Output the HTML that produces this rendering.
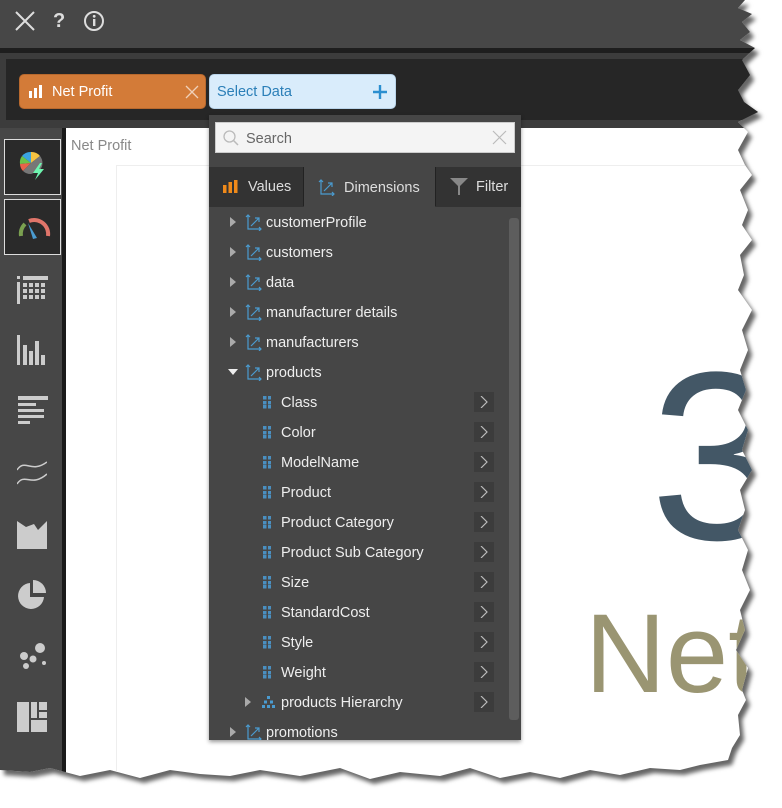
<!DOCTYPE html>
<html><head><meta charset="utf-8"><style>
*{margin:0;padding:0;box-sizing:border-box}
body{width:782px;height:804px;background:#fff;position:relative;overflow:hidden;font-family:"Liberation Sans",sans-serif}
.wrap{position:absolute;left:0;top:0;width:782px;height:804px;filter:drop-shadow(4px 5px 2px rgba(0,0,0,.6))}
.app{position:absolute;left:0;top:0;width:782px;height:804px;background:#fff;
clip-path:polygon(0 0,745px 0,738px 8px,752px 14px,742px 22px,750px 32px,740px 40px,755px 48px,742px 60px,750px 75px,738px 90px,744px 102px,758px 112px,738px 122px,748px 132px,738px 150px,745px 165px,752px 175px,740px 190px,748px 210px,742px 225px,752px 240px,740px 255px,744px 275px,738px 290px,752px 310px,742px 330px,748px 350px,740px 370px,746px 390px,738px 410px,748px 430px,742px 450px,752px 470px,740px 490px,745px 510px,738px 530px,748px 550px,742px 570px,750px 590px,740px 610px,745px 630px,736px 650px,748px 668px,742px 690px,746px 700px,738px 715px,740px 735px,732px 748px,728px 760px,700px 765px,680px 770px,650px 768px,620px 775px,590px 770px,560px 778px,530px 772px,500px 778px,470px 768px,440px 776px,400px 772px,370px 779px,340px 768px,300px 776px,260px 770px,230px 776px,200px 774px,170px 770px,140px 778px,110px 770px,80px 776px,50px 768px,30px 772px,0 770px)}
.top{position:absolute;left:0;top:0;width:782px;height:48px;background:#474747}
.b1{position:absolute;left:0;top:48px;width:782px;height:5px;background:#1e1e1e}
.b2{position:absolute;left:0;top:53px;width:782px;height:75px;background:#3c3c3c}
.tb{position:absolute;left:6px;top:59px;width:776px;height:61px;background:#262626}
.side{position:absolute;left:0;top:128px;width:62px;height:680px;background:#474747}
.sideb{position:absolute;left:62px;top:128px;width:4px;height:680px;background:#1a1a1a}
.sb{position:absolute;left:4px;width:57px;height:56px;border:1px solid #ddd;background:#2a2a2a}
.si{position:absolute;left:17px}
.pill{position:absolute;top:74px;height:35px;border-radius:5px;font-size:14.5px;line-height:35px}
.panel{position:absolute;left:209px;top:115px;width:312px;height:625px;background:#464646;box-shadow:0 2px 4px rgba(0,0,0,.4)}
.row{position:absolute;left:0;height:30px;line-height:32px;color:#eee;font-size:14.5px;width:300px}
.tri{position:absolute;width:0;height:0;border-top:5px solid transparent;border-bottom:5px solid transparent;border-left:6px solid #aaa;top:10px}
.trid{position:absolute;width:0;height:0;border-left:5px solid transparent;border-right:5px solid transparent;border-top:6px solid #eee;top:12px}
.arr{position:absolute;left:265px;top:5px;width:20px;height:20px;background:#3c3c3c}
.grid{position:absolute;top:9px;width:8px;height:13px;background:
linear-gradient(#4a8fc0,#4a8fc0) 0 0/3.5px 3.5px,linear-gradient(#4a8fc0,#4a8fc0) 4.5px 0/3.5px 3.5px,
linear-gradient(#4a8fc0,#4a8fc0) 0 4.7px/3.5px 3.5px,linear-gradient(#4a8fc0,#4a8fc0) 4.5px 4.7px/3.5px 3.5px,
linear-gradient(#4a8fc0,#4a8fc0) 0 9.4px/3.5px 3.5px,linear-gradient(#4a8fc0,#4a8fc0) 4.5px 9.4px/3.5px 3.5px;background-repeat:no-repeat}
</style></head><body>
<div class="wrap"><div class="app">
<div class="top">
<svg style="position:absolute;left:15px;top:11px" width="20" height="20" viewBox="0 0 20 20"><path d="M1 1L19 19M19 1L1 19" stroke="#ddd" stroke-width="2"/></svg>
<div style="position:absolute;left:53px;top:10px;color:#ddd;font-size:20px;font-weight:bold">?</div>
<svg style="position:absolute;left:83px;top:10px" width="22" height="22" viewBox="0 0 22 22"><circle cx="11" cy="11" r="9" fill="none" stroke="#ddd" stroke-width="2"/><rect x="10" y="9" width="2.4" height="7" fill="#ddd"/><circle cx="11.2" cy="6.3" r="1.4" fill="#ddd"/></svg>
</div>
<div class="b1"></div><div class="b2"></div><div class="tb"></div>
<div class="pill" style="left:19px;width:187px;background:#d37b38;border:1px solid #b8692e;color:#fff">
<svg style="position:absolute;left:9px;top:10px" width="14" height="13"><rect x="0" y="6" width="3" height="7" fill="#fff"/><rect x="5" y="3" width="3" height="10" fill="#fff"/><rect x="10" y="0" width="3" height="13" fill="#fff"/></svg>
<span style="position:absolute;left:32px">Net Profit</span>
<svg style="position:absolute;left:165px;top:10px" width="14" height="14"><path d="M1 1L13 13M13 1L1 13" stroke="#f0d0b8" stroke-width="1.3"/></svg></div>
<div class="pill" style="left:209px;width:187px;background:#d9ecfb;border:1px solid #b9d4ea;color:#2b7fb8">
<span style="position:absolute;left:7px">Select Data</span>
<svg style="position:absolute;left:163px;top:10px" width="14" height="14"><path d="M7 0V14M0 7H14" stroke="#2b8fd0" stroke-width="2.4"/></svg></div>
<div class="side"></div><div class="sideb"></div>
<div class="sb" style="top:139px"><svg style="position:absolute;left:14px;top:11px" width="30" height="30" viewBox="0 0 30 30"><path d="M12 12L12 1A11 11 0 0 1 21 5Z" fill="#f5c342"/><path d="M12 12L3 5A11 11 0 0 1 12 1Z" fill="#3aa3e0"/><path d="M12 12L1 13A11 11 0 0 1 3 5Z" fill="#6cc24a"/><path d="M12 12L4 20A11 11 0 0 1 1 13Z" fill="#e8624a"/><path d="M12 12L21 5A11 11 0 0 1 20 20L12 23A11 11 0 0 1 4 20Z" fill="#777"/><path d="M21 12L14 22H19L16 29L25 18H20L23 12Z" fill="#6ef5b0"/></svg></div>
<div class="sb" style="top:199px"><svg style="position:absolute;left:12px;top:14px" width="34" height="26" viewBox="0 0 34 26"><path d="M4 22A14 14 0 0 1 8 10" stroke="#7aa050" stroke-width="4" fill="none"/><path d="M12 7A14 14 0 0 1 31 22" stroke="#e0756a" stroke-width="4" fill="none"/><path d="M11 9L20 24L16 25Z" fill="#4a9bd0"/></svg></div>
<svg class="si" style="top:276px" width="31" height="28"><rect x="0" y="0" width="3" height="3" fill="#ccc"/><rect x="0" y="6" width="3" height="22" fill="#ccc"/><g fill="#ccc"><rect x="6" y="0" width="25" height="4"/></g><g fill="#ccc"><rect x="6" y="7" width="4" height="4"/><rect x="12" y="7" width="4" height="4"/><rect x="18" y="7" width="4" height="4"/><rect x="24" y="7" width="4" height="4"/><rect x="6" y="13" width="4" height="4"/><rect x="12" y="13" width="4" height="4"/><rect x="18" y="13" width="4" height="4"/><rect x="24" y="13" width="4" height="4"/><rect x="6" y="19" width="4" height="4"/><rect x="12" y="19" width="4" height="4"/><rect x="18" y="19" width="4" height="4"/><rect x="24" y="19" width="4" height="4"/></g></svg>
<svg class="si" style="top:335px" width="30" height="30" fill="#ccc"><rect x="0" y="0" width="3" height="30"/><rect x="6" y="10" width="4" height="20"/><rect x="12" y="16" width="4" height="14"/><rect x="18" y="6" width="4" height="24"/><rect x="24" y="20" width="4" height="10"/></svg>
<svg class="si" style="top:396px;left:18px" width="30" height="30" fill="#ccc"><rect x="0" y="0" width="30" height="4"/><rect x="0" y="7" width="18" height="3"/><rect x="0" y="13" width="26" height="3"/><rect x="0" y="19" width="26" height="3"/><rect x="0" y="25" width="12" height="3"/></svg>
<svg class="si" style="top:458px" width="30" height="28"><path d="M0 12C8 0 14 16 30 4M0 26C8 14 14 30 30 16" stroke="#ccc" stroke-width="1.5" fill="none"/></svg>
<svg class="si" style="top:521px" width="30" height="28"><path d="M0 0L9 6L17 3L21 9L30 0V28H0Z" fill="#ccc"/></svg>
<svg class="si" style="top:580px" width="30" height="30"><path d="M13 3A13 13 0 1 0 27 17H13Z" fill="#ccc"/><path d="M16 0A13 13 0 0 1 29 13H16Z" fill="#ccc"/></svg>
<svg class="si" style="top:641px" width="30" height="30" fill="#ccc"><circle cx="23" cy="7" r="5"/><circle cx="7" cy="15" r="4"/><circle cx="16" cy="18" r="3.5"/><circle cx="9" cy="25" r="3"/><circle cx="27" cy="22" r="2"/></svg>
<svg class="si" style="top:702px" width="30" height="30" fill="#ccc"><rect x="0" y="0" width="12" height="30"/><rect x="14" y="0" width="6" height="16"/><rect x="22" y="0" width="8" height="8"/><rect x="22" y="10" width="8" height="6"/><rect x="14" y="18" width="16" height="12"/></svg>
<div style="position:absolute;left:71px;top:138px;color:#888;font-size:14.5px">Net Profit</div>
<div style="position:absolute;left:116px;top:165px;width:700px;height:1px;background:#eee"></div>
<div style="position:absolute;left:116px;top:165px;width:1px;height:640px;background:#eee"></div>
<div style="position:absolute;left:650px;top:336px;color:#435766;font-size:240px;line-height:1">3</div>
<div style="position:absolute;left:585px;top:598px;color:#9a9572;font-size:112px;line-height:1">Net</div>

<div class="panel">
<div style="position:absolute;left:6px;top:7px;width:300px;height:31px;background:#f4f4f4;border:1px solid #ccc">
<svg style="position:absolute;left:7px;top:7px" width="16" height="16"><circle cx="6.5" cy="6.5" r="5.5" stroke="#bbb" stroke-width="1.3" fill="none"/><path d="M10.5 10.5L15 15" stroke="#bbb" stroke-width="1.5"/></svg>
<span style="position:absolute;left:30px;top:8px;color:#666;font-size:14.5px">Search</span>
<svg style="position:absolute;left:276px;top:7px" width="15" height="15"><path d="M1 1L14 14M14 1L1 14" stroke="#bbb" stroke-width="1.2"/></svg></div>
<div style="position:absolute;left:0;top:52px;width:312px;height:40px;background:#333"></div>
<div style="position:absolute;left:0;top:52px;width:95px;height:39px;border-right:1px solid #222;color:#ddd;font-size:14.5px;line-height:40px">
<svg style="position:absolute;left:14px;top:13px" width="15" height="13" fill="#f08a1a"><rect x="0" y="5" width="3.5" height="8"/><rect x="5.5" y="2" width="3.5" height="11"/><rect x="11" y="0" width="3.5" height="13"/></svg><span style="position:absolute;left:39px">Values</span></div>
<div style="position:absolute;left:95px;top:52px;width:131px;height:40px;background:#464646;color:#ddd;font-size:14.5px;line-height:42px">
<svg style="position:absolute;left:14px;top:12px" width="17" height="17"><path d="M3 1V15H16M1 3L3 1L5 3M14 13L16 15L14 17M6 12L14 4M10 4H14V8" stroke="#4a9bd0" stroke-width="1.2" fill="none"/></svg><span style="position:absolute;left:40px">Dimensions</span></div>
<div style="position:absolute;left:226px;top:52px;width:86px;height:39px;border-left:1px solid #222;color:#ddd;font-size:14.5px;line-height:40px">
<svg style="position:absolute;left:14px;top:11px" width="18" height="17"><path d="M0 0H18L10 8V17H8V8Z" fill="#888"/></svg><span style="position:absolute;left:40px">Filter</span></div>
<div style="position:absolute;left:300px;top:103px;width:10px;height:502px;background:#5d5d5d;border-radius:3px"></div>
<div style="position:absolute;left:0;top:92px;width:300px;height:533px;overflow:hidden">
<div id="rows"></div>
</div>
</div>
</div></div>
<script>
var dims=['customerProfile','customers','data','manufacturer details','manufacturers'];
var attrs=['Class','Color','ModelName','Product','Product Category','Product Sub Category','Size','StandardCost','Style','Weight'];
var ic='<svg style="position:absolute;left:36px;top:7px" width="17" height="17"><path d="M3 1V15H16M1 3L3 1L5 3M14 13L16 15L14 17M6 12L14 4M10 4H14V8" stroke="#4a9bd0" stroke-width="1.2" fill="none"/></svg>';
var ch='<div class="arr"><svg style="position:absolute;left:6px;top:4px" width="8" height="12"><path d="M1 0L7 6L1 12" stroke="#bbb" stroke-width="1.2" fill="none"/></svg></div>';
var h='',y=0;
dims.forEach(function(d){h+='<div class="row" style="top:'+y+'px"><div class="tri" style="left:21px"></div>'+ic+'<span style="position:absolute;left:57px">'+d+'</span></div>';y+=30;});
h+='<div class="row" style="top:'+y+'px"><div class="trid" style="left:19px"></div>'+ic+'<span style="position:absolute;left:57px">products</span></div>';y+=30;
attrs.forEach(function(a){h+='<div class="row" style="top:'+y+'px"><div class="grid" style="left:54px"></div><span style="position:absolute;left:72px">'+a+'</span>'+ch+'</div>';y+=30;});
h+='<div class="row" style="top:'+y+'px"><div class="tri" style="left:36px"></div><svg style="position:absolute;left:53px;top:9px" width="13" height="12" fill="#4a9bd0"><rect x="5" y="0" width="3" height="3"/><rect x="2" y="4.5" width="3" height="3"/><rect x="8" y="4.5" width="3" height="3"/><rect x="0" y="9" width="3" height="3"/><rect x="5" y="9" width="3" height="3"/><rect x="10" y="9" width="3" height="3"/></svg><span style="position:absolute;left:72px">products Hierarchy</span>'+ch+'</div>';y+=30;
h+='<div class="row" style="top:'+y+'px"><div class="tri" style="left:21px"></div>'+ic+'<span style="position:absolute;left:57px">promotions</span></div>';
document.getElementById('rows').innerHTML=h;
</script>
</body></html>
